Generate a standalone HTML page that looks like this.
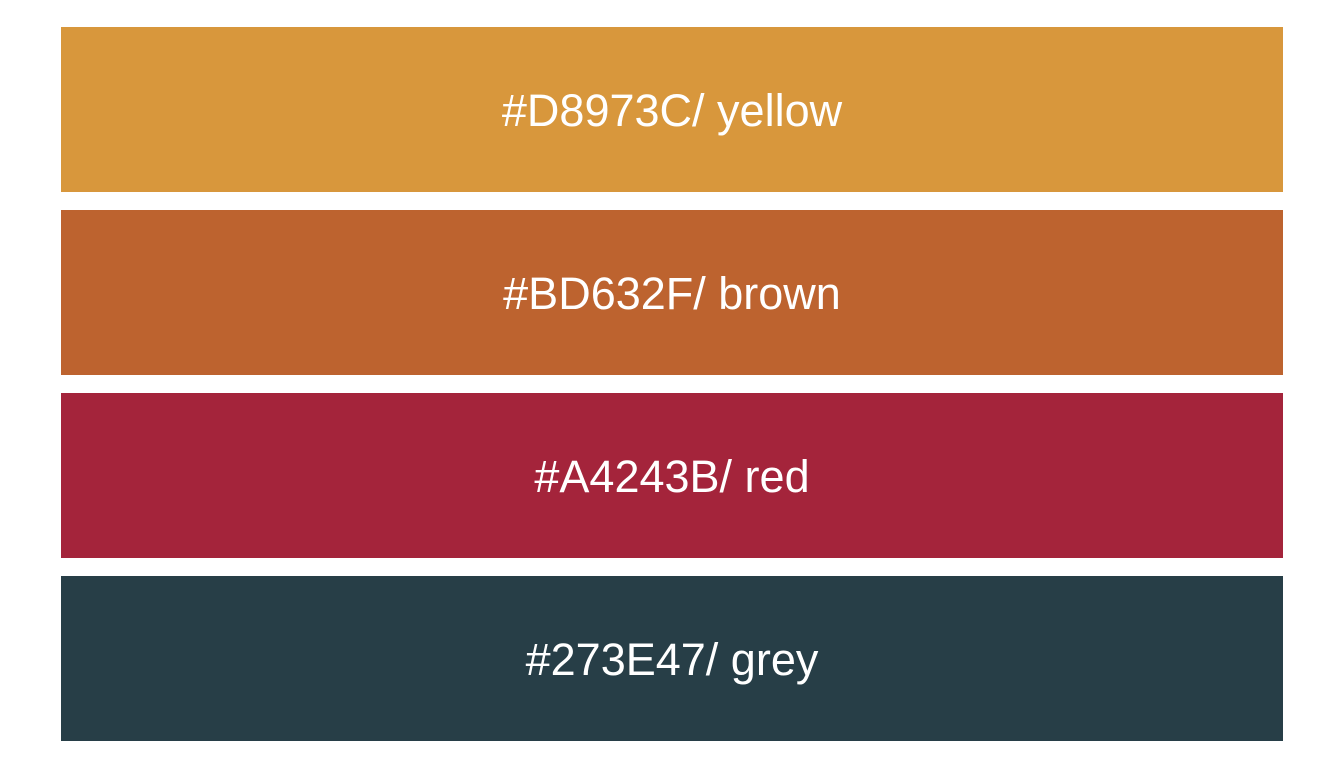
<!DOCTYPE html>
<html><head><style>
body{margin:0;width:1344px;height:768px;background:#fff;position:relative;overflow:hidden;font-family:"Liberation Sans",sans-serif;}
.b{position:absolute;left:61px;width:1222px;height:165px;color:#fff;font-size:45px;line-height:167px;text-align:center;}
</style></head><body>
<div class="b" style="top:27px;background:#D8973C">#D8973C/ yellow</div>
<div class="b" style="top:210px;background:#BD632F">#BD632F/ brown</div>
<div class="b" style="top:393px;background:#A4243B">#A4243B/ red</div>
<div class="b" style="top:576px;background:#273E47">#273E47/ grey</div>
</body></html>
